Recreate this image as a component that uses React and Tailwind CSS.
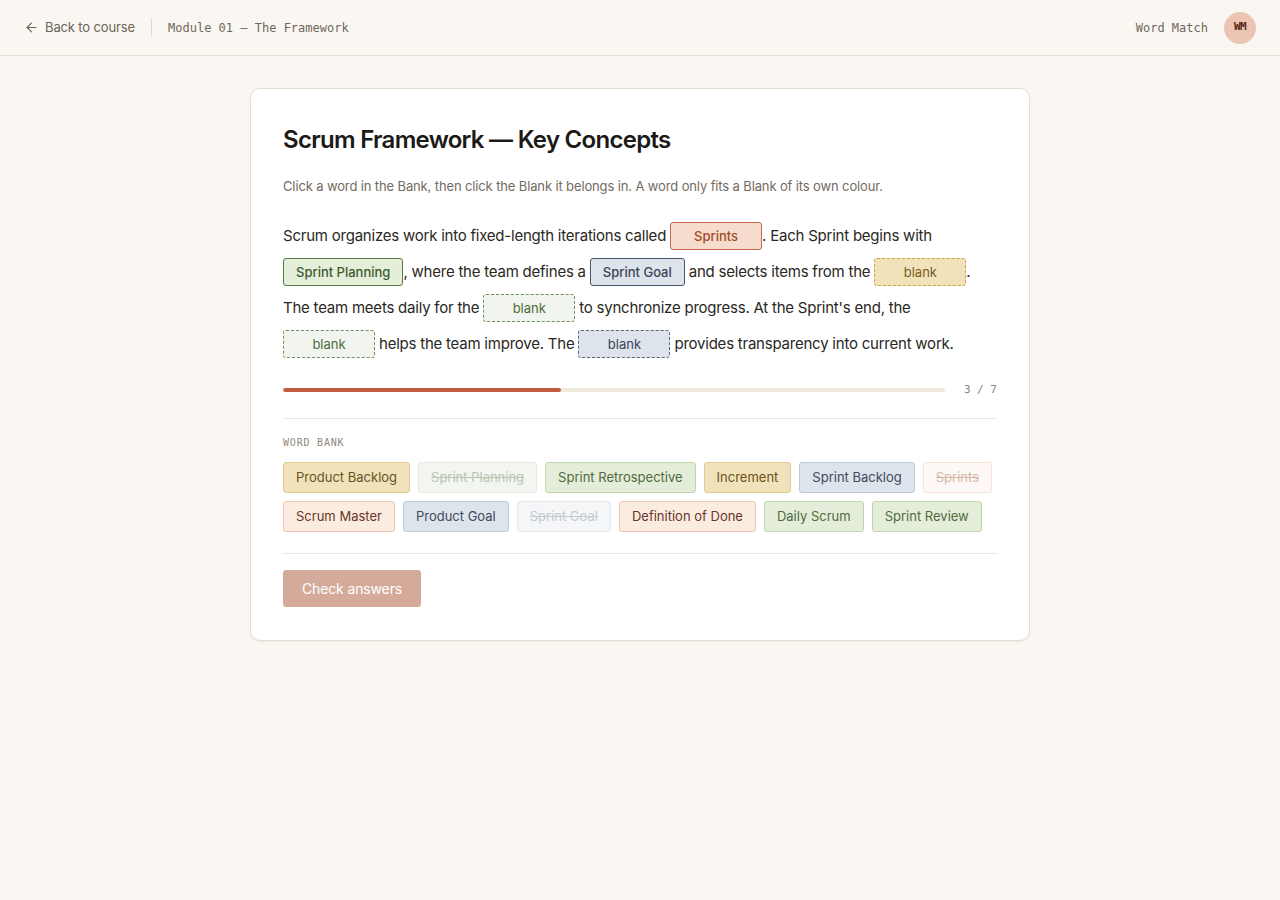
import React from 'react';
import { ArrowLeft } from 'lucide-react';

const sans = { fontFamily: 'Inter, "Noto Sans", sans-serif' };
const mono = 'font-["DejaVu_Sans_Mono","Liberation_Mono",monospace]';

const slotStyles = {
  peach: 'bg-[#f6dccd] border-[#c8694a] text-[#a3482a] border-solid font-medium',
  greenFilled: 'bg-[#e4eed9] border-[#5a7a4a] text-[#3e5a30] border-solid font-medium',
  blueFilled: 'bg-[#dde4ec] border-[#4a5568] text-[#3a4656] border-solid font-medium',
  yellow: 'bg-[#f1e2bc] border-[#c9a53a] text-[#7a5c1a] border-dashed',
  green: 'bg-[#f2f5ef] border-[#6f8f5f] text-[#4c6b3d] border-dashed',
  blue: 'bg-[#dde4ec] border-[#5a6678] text-[#3a4656] border-dashed',
};

const Slot = ({ tone, children }) => (
  <span
    className={`inline-flex items-center justify-center align-middle min-w-[92px] h-[28px] px-3 rounded-[3px] border text-[13px] tracking-normal leading-none ${slotStyles[tone]}`}
  >
    {children}
  </span>
);

const chipStyles = {
  yellow: 'bg-[#f1e2bc] border-[#e0cb92] text-[#6b5220]',
  green: 'bg-[#e3edd9] border-[#c2d6b0] text-[#4f6b40]',
  blue: 'bg-[#dde4ec] border-[#bfcad7] text-[#3f4a5a]',
  peach: 'bg-[#fbece2] border-[#eec6b2] text-[#6b3424]',
  greenUsed: 'bg-[#f3f6f0] border-[#e3ebdc] text-[#b9c5b1] line-through',
  peachUsed: 'bg-[#fdf8f5] border-[#f6e4da] text-[#d6b8ab] line-through',
  blueUsed: 'bg-[#f4f6f8] border-[#e4e8ed] text-[#c4cad2] line-through',
};

const bank = [
  ['Product Backlog', 'yellow'],
  ['Sprint Planning', 'greenUsed'],
  ['Sprint Retrospective', 'green'],
  ['Increment', 'yellow'],
  ['Sprint Backlog', 'blue'],
  ['Sprints', 'peachUsed'],
  ['Scrum Master', 'peach'],
  ['Product Goal', 'blue'],
  ['Sprint Goal', 'blueUsed'],
  ['Definition of Done', 'peach'],
  ['Daily Scrum', 'green'],
  ['Sprint Review', 'green'],
];

export default function App() {
  return (
    <div className="min-h-screen bg-[#faf7f2] text-[#1f1c19]" style={sans}>
      {/* Top bar */}
      <header className="h-[56px] border-b border-[#e6dfd3] flex items-center justify-between px-6">
        <div className="flex items-center">
          <button className="flex items-center gap-1.5 text-[13px] tracking-[-0.01em] text-[#6b6358]">
            <ArrowLeft size={15} strokeWidth={1.8} />
            Back to course
          </button>
          <div className="w-px h-[19px] bg-[#e2dace] mx-4" />
          <span className={`${mono} text-[12px] text-[#6f675d]`}>Module 01 — The Framework</span>
        </div>
        <div className="flex items-center gap-4">
          <span className={`${mono} text-[12px] text-[#6f675d]`}>Word Match</span>
          <div className={`${mono} w-8 h-8 rounded-full bg-[#ebc5b2] flex items-center justify-center text-[11px] font-bold text-[#5a2418] tracking-tighter`}>
            WM
          </div>
        </div>
      </header>

      <main className="flex justify-center pt-8">
        <div className="w-[780px] bg-white border border-[#e4dccf] rounded-[10px] shadow-[0_1px_2px_rgba(0,0,0,0.05)] px-8 pt-[35px] pb-[33px]">
          <h1 className="text-[24px] font-semibold tracking-[-0.03em] text-[#1c1a17] leading-8">
            Scrum Framework — Key Concepts
          </h1>
          <p className="mt-[21px] text-[13px] tracking-[-0.01em] text-[#736b61]">
            Click a word in the Bank, then click the Blank it belongs in. A word only fits a Blank of its own colour.
          </p>

          {/* fill-in text, lines broken as in the lesson */}
          <p className="mt-[21px] text-[15px] tracking-[-0.015em] leading-[36px] text-[#2a2723]">
            Scrum organizes work into fixed-length iterations called <Slot tone="peach">Sprints</Slot>. Each Sprint begins with
            <br />
            <Slot tone="greenFilled">Sprint Planning</Slot>, where the team defines a <Slot tone="blueFilled">Sprint Goal</Slot> and selects items from the{' '}
            <Slot tone="yellow">blank</Slot>.
            <br />
            The team meets daily for the <Slot tone="green">blank</Slot> to synchronize progress. At the Sprint's end, the
            <br />
            <Slot tone="green">blank</Slot> helps the team improve. The <Slot tone="blue">blank</Slot> provides transparency into current work.
          </p>

          <div className="mt-[20px] flex items-center gap-[19px]">
            <div className="flex-1 h-1 rounded-full bg-[#efe8dc] overflow-hidden">
              <div className="h-full bg-[#bf5d3d] rounded-full" style={{ width: `${(3 / 7) * 100 - 0.8}%` }} />
            </div>
            <span className={`${mono} text-[11px] text-[#8a8278] whitespace-nowrap`}>3 / 7</span>
          </div>

          <div className="mt-[20px] border-t border-[#ece5d9]" />

          <div className={`${mono} mt-[16px] text-[10px] tracking-[0.08em] text-[#8f877c]`}>WORD BANK</div>

          <div className="mt-[12px] flex flex-wrap gap-2">
            {bank.map(([word, tone]) => (
              <button
                key={word}
                className={`h-[31px] px-[12px] rounded-[3px] border text-[13px] ${chipStyles[tone]}`}
              >
                {word}
              </button>
            ))}
          </div>

          <div className="mt-[21px] border-t border-[#ece5d9]" />

          <button className="mt-4 h-[37px] px-[19px] rounded-[3px] bg-[#d4ab9b] text-white text-[14px] tracking-[-0.01em]">
            Check answers
          </button>
        </div>
      </main>
    </div>
  );
}
